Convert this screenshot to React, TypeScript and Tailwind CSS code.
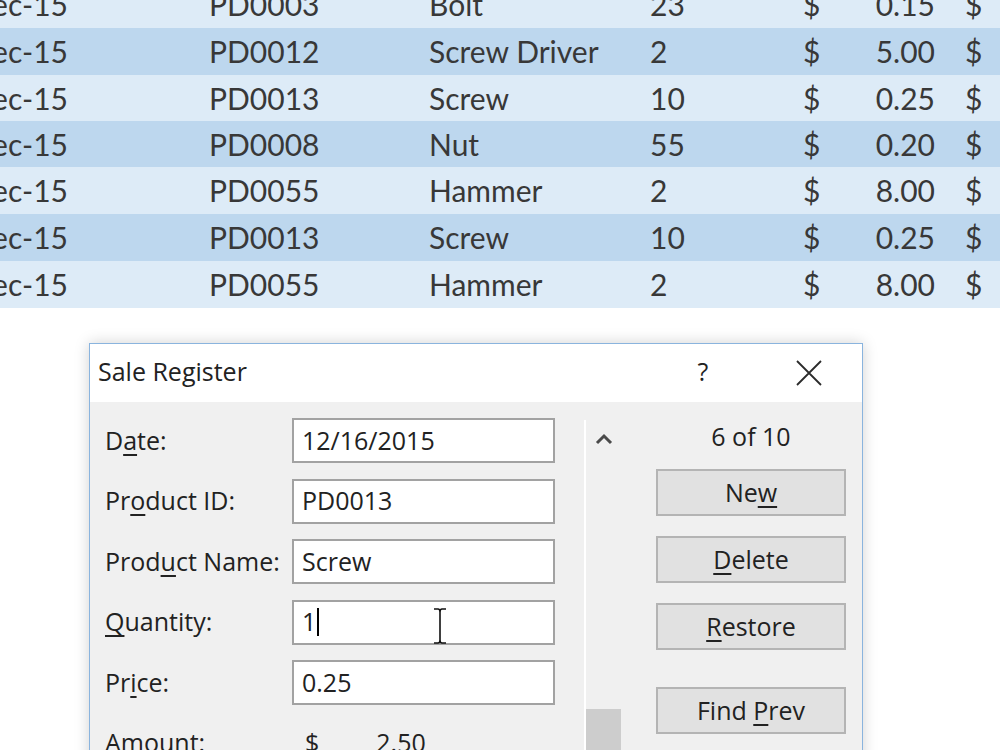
import React from 'react';

type Row = { id: string; name: string; qty: string; price: string; dark: boolean; h: string };

const rows: Row[] = [
  { id: 'PD0003', name: 'Bolt', qty: '23', price: '0.15', dark: false, h: 'h-[47px]' },
  { id: 'PD0012', name: 'Screw Driver', qty: '2', price: '5.00', dark: true, h: 'h-[47px]' },
  { id: 'PD0013', name: 'Screw', qty: '10', price: '0.25', dark: false, h: 'h-[46px]' },
  { id: 'PD0008', name: 'Nut', qty: '55', price: '0.20', dark: true, h: 'h-[46px]' },
  { id: 'PD0055', name: 'Hammer', qty: '2', price: '8.00', dark: false, h: 'h-[47px]' },
  { id: 'PD0013', name: 'Screw', qty: '10', price: '0.25', dark: true, h: 'h-[47px]' },
  { id: 'PD0055', name: 'Hammer', qty: '2', price: '8.00', dark: false, h: 'h-[47px]' },
];

// label with an accelerator key underlined, Windows style
const Acc = ({ before, k, after }: { before: string; k: string; after: string }) => (
  <span>
    {before}
    <span className="underline decoration-[1.5px] underline-offset-[4px]">{k}</span>
    {after}
  </span>
);

const Field = ({ label, value, children }: { label: React.ReactNode; value: string; children?: React.ReactNode }) => (
  <div className="flex items-center h-[45px]">
    <div className="w-[187px] whitespace-nowrap">{label}</div>
    <div className="relative w-[263px] h-[45px] bg-white border-2 border-[#a2a2a2] flex items-center pl-[8px]">
      <span>{value}</span>
      {children}
    </div>
  </div>
);

const DlgButton = ({ children, className = '' }: { children: React.ReactNode; className?: string }) => (
  <div className={`h-[47px] w-[190px] bg-[#e1e1e1] border-2 border-[#b4b4b4] flex items-center justify-center ${className}`}>
    {children}
  </div>
);

export default function App() {
  return (
    <div className="w-[1000px] h-[750px] overflow-hidden bg-white relative">
      {/* spreadsheet rows behind the form */}
      <div className="-mt-[19px] text-[30px] text-[#383838]" style={{ fontFamily: 'Lato, "Liberation Sans", sans-serif' }}>
        {rows.map((r, i) => (
          <div
            key={i}
            className={`grid grid-cols-[209px_220px_221px_153px_132px_1fr] items-center whitespace-nowrap ${r.h} ${
              r.dark ? 'bg-[#bdd7ee]' : 'bg-[#ddebf7]'
            }`}
          >
            <div className="flex justify-end pr-[141px]">Dec-15</div>
            <div>{r.id}</div>
            <div>{r.name}</div>
            <div>{r.qty}</div>
            <div className="flex justify-between">
              <span>$</span>
              <span>{r.price}</span>
            </div>
            <div className="pl-[30px]">$</div>
          </div>
        ))}
      </div>

      {/* Sale Register userform */}
      <div
        className="mt-[35px] ml-[89px] w-[774px] h-[460px] border border-[#8ab4de] bg-[#f0f0f0] shadow-[0_0_14px_rgba(0,0,0,0.18)] text-[25px] text-[#222]"
        style={{ fontFamily: '"Open Sans", "Noto Sans", sans-serif' }}
      >
        <div className="h-[58px] bg-white flex items-center pl-[8px]">
          <span className="flex-1 -mt-[3px]">Sale Register</span>
          <span className="w-[40px] text-center mr-[73px] -mt-[3px]">?</span>
          <svg width="26" height="26" viewBox="0 0 26 26" className="mr-[40px]">
            <path d="M1 1 L25 25 M25 1 L1 25" stroke="#2b2b2b" strokeWidth="1.8" fill="none" />
          </svg>
        </div>

        <div className="flex">
          <div className="pl-[15px] pt-[16px] flex flex-col gap-[15.5px]">
            <Field label={<Acc before="D" k="a" after="te:" />} value="12/16/2015" />
            <Field label={<Acc before="Pr" k="o" after="duct ID:" />} value="PD0013" />
            <Field label={<Acc before="Prod" k="u" after="ct Name:" />} value="Screw" />
            <Field label={<Acc before="" k="Q" after="uantity:" />} value="1">
              <span className="w-[2px] h-[28px] bg-black ml-[1px]" />
              <svg width="16" height="36" viewBox="0 0 16 36" className="absolute left-[138px] top-[6px]">
                <path d="M2 1 H6 Q8 1 8 4 V32 Q8 35 6 35 H2 M14 1 H10 Q8 1 8 4 M8 32 Q8 35 10 35 H14" stroke="#111" strokeWidth="1.6" fill="none" />
              </svg>
            </Field>
            <Field label={<Acc before="Pr" k="i" after="ce:" />} value="0.25" />
            <div className="flex items-center h-[45px]">
              <div className="w-[187px]">Amount:</div>
              <div className="flex pl-[13px]">
                <span>$</span>
                <span className="ml-[57px]">2.50</span>
              </div>
            </div>
          </div>

          {/* scroll bar */}
          <div className="ml-[29px] pt-[18px] flex">
            <div className="w-[2px] bg-white" />
            <div className="w-[35px] flex flex-col items-center">
              <svg width="18" height="12" viewBox="0 0 18 12" className="mt-[13px]">
                <path d="M2 10 L9 3 L16 10" stroke="#4a4a4a" strokeWidth="3" fill="none" />
              </svg>
              <div className="mt-[264px] w-[35px] h-[80px] bg-[#cdcdcd]" />
            </div>
          </div>

          {/* record nav buttons */}
          <div className="ml-[35px] pt-[17px] flex flex-col">
            <div className="h-[36px] flex items-center justify-center">6 of 10</div>
            <DlgButton className="mt-[14px]">
              <Acc before="Ne" k="w" after="" />
            </DlgButton>
            <DlgButton className="mt-[20px]">
              <Acc before="" k="D" after="elete" />
            </DlgButton>
            <DlgButton className="mt-[20px]">
              <Acc before="" k="R" after="estore" />
            </DlgButton>
            <DlgButton className="mt-[37px]">
              <Acc before="Find " k="P" after="rev" />
            </DlgButton>
          </div>
        </div>
      </div>
    </div>
  );
}
